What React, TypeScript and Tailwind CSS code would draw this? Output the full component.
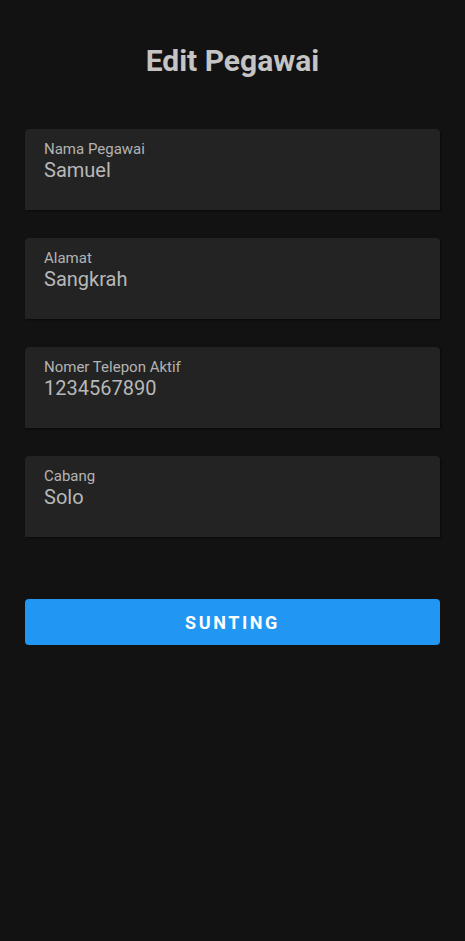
import React from "react";

const fields = [
  { label: "Nama Pegawai", value: "Samuel" },
  { label: "Alamat", value: "Sangkrah" },
  { label: "Nomer Telepon Aktif", value: "1234567890" },
  { label: "Cabang", value: "Solo" },
];

export default function App() {
  return (
    <div
      className="w-[465px] h-[941px] bg-[#121212] flex flex-col px-[25px]"
      style={{ fontFamily: "Roboto, 'Liberation Sans', sans-serif" }}
    >
      <h1 className="mt-[43px] h-[36px] text-center text-[30px] leading-[36px] font-bold text-[#c4c4c4]">
        Edit Pegawai
      </h1>
      <div className="mt-[50px] flex flex-col gap-[28px]">
        {fields.map((f) => (
          <div
            key={f.label}
            className="h-[81px] rounded-t-[4px] bg-[#232323] shadow-[1px_1px_2px_rgba(0,0,0,0.5)] pl-[19px] pt-[12px]"
          >
            <div className="text-[15px] leading-[17px] text-[#b3b3b3]">{f.label}</div>
            <div className="text-[20px] leading-[25px] text-[#b8b8b8]">{f.value}</div>
          </div>
        ))}
      </div>
      <button className="mt-[62px] h-[46px] w-full rounded-[4px] bg-[#2196f3] text-white font-bold text-[18px] tracking-[2.6px]">
        SUNTING
      </button>
    </div>
  );
}
